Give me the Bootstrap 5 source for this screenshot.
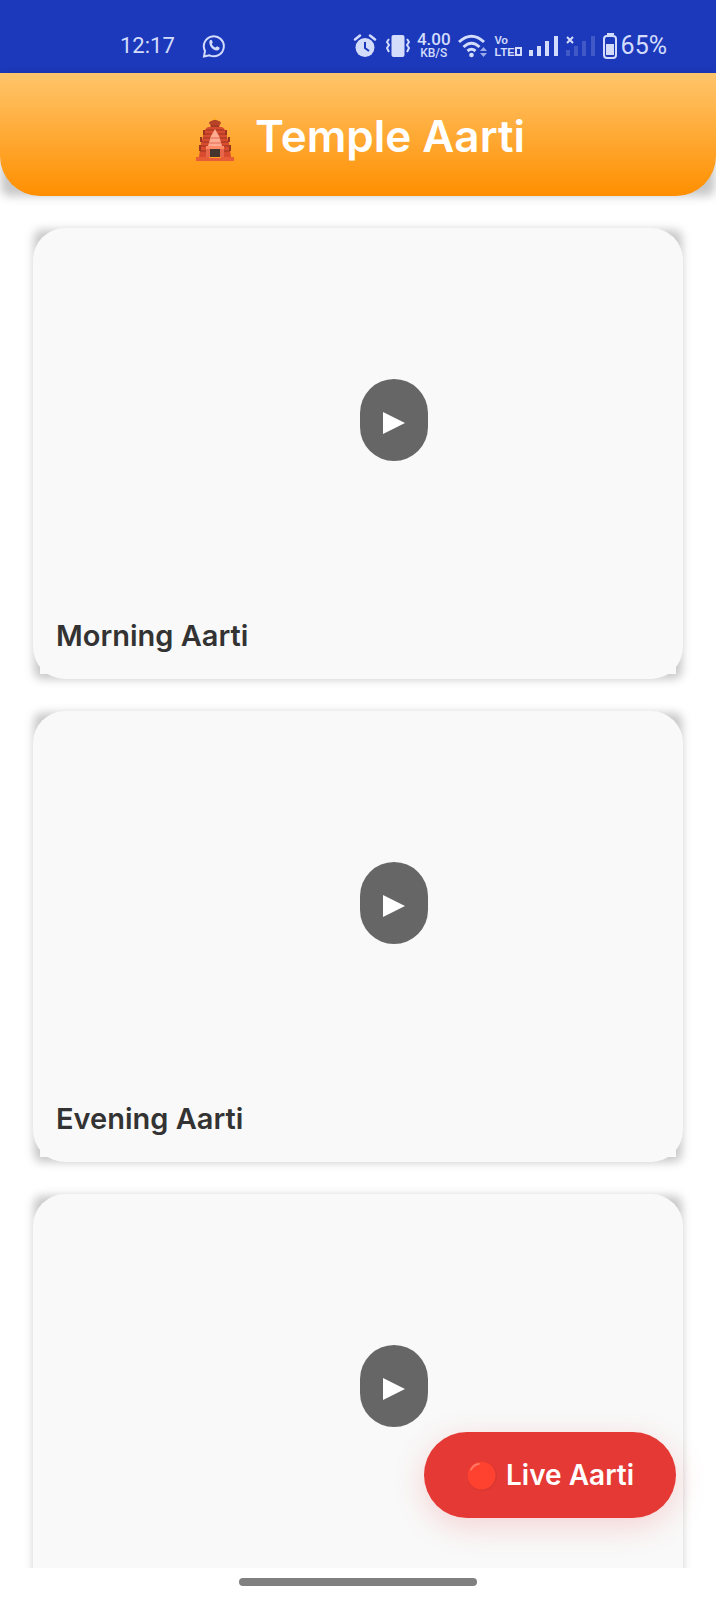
<!DOCTYPE html>
<html lang="en">
<head>
<meta charset="utf-8">
<meta name="viewport" content="width=device-width, initial-scale=1">
<title>Temple Aarti</title>
<link href="https://cdn.jsdelivr.net/npm/bootstrap@5.3.0/dist/css/bootstrap.min.css" rel="stylesheet">
<style>
  body { font-family: Inter, "Liberation Sans", sans-serif; background: #fff; color: #333; }
  svg { display: block; flex: none; }

  .status-bar { background: #1c39bb; color: #d3dcfb; height: 73px; padding: 18px 49px 0 120px; }
  .status-time { font: 400 22px/28px Roboto, sans-serif; }
  .status-battery { font: 400 25px/28px Roboto, sans-serif; }
  .status-icons { gap: 7px; }
  .net-speed { font: 500 17px/15px Roboto, sans-serif; text-align: center; }
  .net-speed span { display: block; font-size: 12px; line-height: 12px; }
  .volte { font: 700 11px/12px "Liberation Sans", sans-serif; }
  .volte span { display: block; }

  /* Soft block drawn behind a rounded panel; its corners stay visible */
  .raised { position: relative; isolation: isolate; }
  .raised::before { content: ""; position: absolute; inset: 2px 1px 0; z-index: -1;
    background: rgba(0,0,0,.22); border-radius: 8px; filter: blur(5px); }
  .hero-face { height: 123px; padding: 3px 0 0 4px; gap: 20px; color: #fff;
    background: linear-gradient(#ffc56b, #ff8f00); border-radius: 0 0 40px 40px; }
  .hero-face h1 { font-size: 44px; line-height: 56px; font-weight: 600; }

  .feed { padding: 32px 33px 0; gap: 32px; }
  .aarti { height: 451px; flex: none; background: transparent; border: 0; }
  .aarti-face { background: #f9f9f9; border-radius: 32px; }
  .aarti-video { padding: 151px 0 0 50%; }
  .play { width: 68px; height: 82px; border-radius: 34px; background: #666; color: #fff; margin-left: 2px; }
  .play:hover { background: #555; color: #fff; }
  .aarti-title { margin: 0 7px 5px; padding: 0 16px 18px; background: #f9f9f9;
    font-size: 29px; line-height: 40px; font-weight: 600; min-height: 58px; }

  .live { position: absolute; right: 40px; bottom: 50px; z-index: 2; height: 86px; padding: 0 42px;
    background: #e53935; color: #fff; font-size: 28px; font-weight: 600; line-height: 36px;
    box-shadow: 0 8px 32px rgba(229,57,53,.2); }
  .live:hover { background: #d32f2f; color: #fff; }
  .gesture { height: 32px; padding-top: 10px; }
  .gesture-pill { width: 33.3%; height: 8px; background: #808080; }
</style>
</head>
<body>
<div class="d-flex flex-column vh-100 overflow-hidden">
  <div class="status-bar d-flex align-items-center justify-content-between flex-shrink-0">
    <div class="d-flex align-items-center">
      <span class="status-time">12:17</span>
      <svg class="ms-4" width="32" height="24" viewBox="-4 0 32 24" fill="none" stroke="currentColor" stroke-width="2">
        <path d="M1 22.500 2 17A10 10 0 1 1 6.500 21.300Z"/>
        <path d="M6.500 7c.8-1.500 2-1.500 2.500-.4l.8 2-1 1.500c1 2 2 2.700 3.700 3.500l1.500-1.400 2.500 1.200c.6 1-.8 3-2.600 3C9.500 16.500 5.500 11 6.500 7z" fill="currentColor" stroke="none"/>
      </svg>
    </div>
    <div class="status-icons d-flex align-items-center">
      <svg width="26" height="24" viewBox="0 0 26 24">
        <circle cx="12" cy="13.500" r="9.500" fill="currentColor"/>
        <path d="M2 5.500 7 1.500M17 1.500l5 4" stroke="currentColor" stroke-width="2.500" stroke-linecap="round"/>
        <path d="M12 8v6l4 3" fill="none" stroke="#1c39bb" stroke-width="2"/>
      </svg>
      <svg width="24" height="24" viewBox="0 0 24 24" fill="none" stroke="currentColor" stroke-width="2">
        <rect x="5.500" y="1" width="13" height="22" rx="2" fill="currentColor" stroke="none"/>
        <path d="M3 5 1 8l2 3-2 3 2 4M21 5l2 3-2 3 2 3-2 4"/>
      </svg>
      <div class="net-speed">4.00<span>KB/S</span></div>
      <svg width="30" height="24" viewBox="0 0 30 24" fill="none" stroke="currentColor" stroke-width="3">
        <path d="M1 8q12.500-11.500 25 0M5.500 13q8-7.500 16 0M9.500 17q4-3.500 8 0"/>
        <circle cx="13.500" cy="21" r="2.300" fill="currentColor" stroke="none"/>
        <path d="M22 17l3.500-4 3.500 4zM22 19l3.500 4 3.500-4z" fill="currentColor" stroke="none" opacity=".7"/>
      </svg>
      <div class="d-flex align-items-end">
        <div class="volte"><span>Vo</span><span>LTE</span></div>
        <svg width="7" height="12" viewBox="0 0 7 12"><path d="M1 2h5v7H1z" fill="none" stroke="currentColor" stroke-width="2"/></svg>
      </div>
      <svg width="30" height="22" viewBox="0 0 30 22" fill="currentColor"><path d="M0 15h4v6H0zM8 11h4v10H8zM16 6h4v15h-4zM25 1h4v20h-4z"/></svg>
      <svg width="30" height="22" viewBox="0 0 30 22" fill="currentColor"><path opacity=".2" d="M0 15h4v6H0zM8 11h4v10H8zM16 6h4v15h-4zM25 1h4v20h-4z"/><path d="m1 2 6 6m0-6L1 8" stroke="currentColor" stroke-width="2"/></svg>
      <div class="d-flex align-items-center gap-1">
        <svg width="14" height="26" viewBox="0 0 14 26" fill="currentColor"><path d="M4 0h7v2H4zM3 11h8v11H3z"/><rect x="1" y="3" width="12" height="22" rx="3" fill="none" stroke="currentColor" stroke-width="2"/></svg>
        <span class="status-battery">65%</span>
      </div>
    </div>
  </div>

  <header class="raised flex-shrink-0">
    <div class="hero-face d-flex align-items-center justify-content-center">
      <svg class="mt-2" width="40" height="44" viewBox="0 0 40 44">
        <path d="M19.500 0h1v6h-1z" fill="#ffa000"/>
        <path d="M15 4q5-4 10 0l-1 7h-8z" fill="#9f3b25"/><ellipse cx="20" cy="5" rx="6" ry="2.500" fill="#b94326"/>
        <path d="M13 9h14q5 3 5 10l2 6 2 14H4l2-14 2-6q0-7 5-10z" fill="#d84b2f"/>
        <path d="M11 12h18M9 16h22M8 20h24M7 24h26M6 28h28M5 33h30" stroke="#983721"/>
        <path d="M9 12v5M31 12v5M6 19v5M34 19v5M5 27v6M35 27v6" stroke="#9b3522" stroke-width="2"/>
        <path d="M20 11 24 18l3 10H13l3-10z" fill="#ffab91"/><path d="M16 20h8M14 25h12" stroke="#df6b50"/>
        <path d="M11 28h18v3H11z" fill="#ff8a65"/><path d="M15 31h10v8H15z" fill="#45352f"/>
        <path d="M11 31h4v8h-4zM25 31h4v8h-4z" fill="#e8674b"/>
        <path d="M1 39h13v1h12v-1h13v4H1z" fill="#e85d37"/>
      </svg>
      <h1 class="m-0">Temple Aarti</h1>
    </div>
  </header>

  <main class="position-relative flex-fill overflow-hidden">
    <div class="feed d-flex flex-column">
      <article class="card aarti raised">
        <div class="aarti-face d-flex flex-column h-100">
          <div class="aarti-video flex-fill">
            <button type="button" class="play btn p-0 d-flex align-items-center justify-content-center" aria-label="Play">
              <svg width="22" height="28" viewBox="0 0 22 28"><path d="M0 6 22 17 0 28z" fill="currentColor"/></svg>
            </button>
          </div>
          <h2 class="aarti-title">Morning Aarti</h2>
        </div>
      </article>
      <article class="card aarti raised">
        <div class="aarti-face d-flex flex-column h-100">
          <div class="aarti-video flex-fill">
            <button type="button" class="play btn p-0 d-flex align-items-center justify-content-center" aria-label="Play">
              <svg width="22" height="28" viewBox="0 0 22 28"><path d="M0 6 22 17 0 28z" fill="currentColor"/></svg>
            </button>
          </div>
          <h2 class="aarti-title">Evening Aarti</h2>
        </div>
      </article>
      <article class="card aarti raised">
        <div class="aarti-face d-flex flex-column h-100">
          <div class="aarti-video flex-fill">
            <button type="button" class="play btn p-0 d-flex align-items-center justify-content-center" aria-label="Play">
              <svg width="22" height="28" viewBox="0 0 22 28"><path d="M0 6 22 17 0 28z" fill="currentColor"/></svg>
            </button>
          </div>
        </div>
      </article>
    </div>
    <button type="button" class="live btn border-0 rounded-pill d-flex align-items-center gap-2">
      <svg width="32" height="32" viewBox="0 0 32 32"><circle cx="16" cy="17" r="15" fill="#d93832"/><circle cx="15.500" cy="16.500" r="14" fill="#ff4130"/><path d="M4 11q3-7 9-7 3 1-1 2-4 1-7 6z" fill="#ff7b68"/></svg>
      <span>Live Aarti</span>
    </button>
  </main>

  <div class="gesture d-flex justify-content-center flex-shrink-0"><div class="gesture-pill rounded-pill"></div></div>
</div>
<script src="https://cdn.jsdelivr.net/npm/bootstrap@5.3.0/dist/js/bootstrap.bundle.min.js"></script>
</body>
</html>
